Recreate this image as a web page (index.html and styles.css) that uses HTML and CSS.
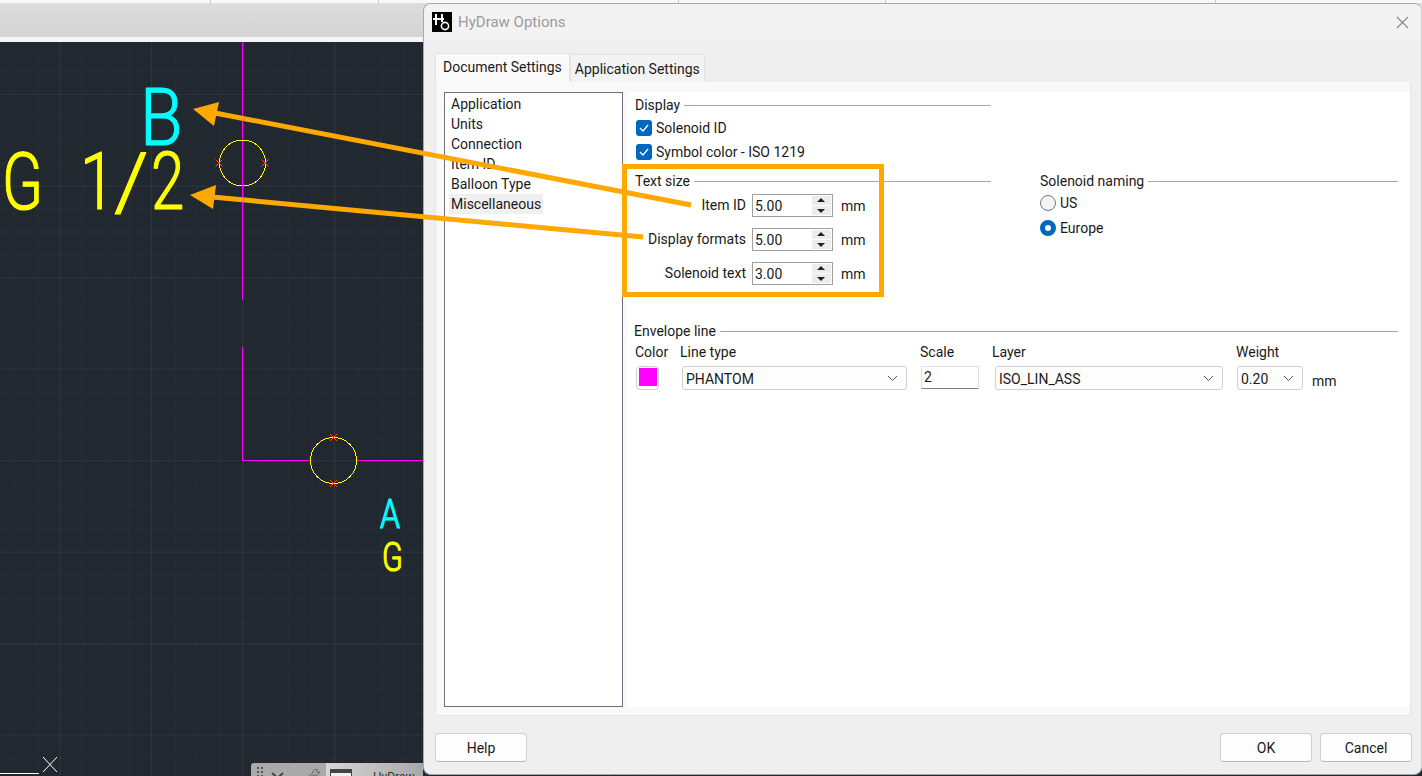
FILE: index.html
```html
<!DOCTYPE html>
<html lang="en">
<head>
    <meta charset="UTF-8">
    <title>HyDraw Options</title>
    <link rel="stylesheet" href="styles.css">
</head>
<body>
    <div class="app-strip">
        <i class="tick t1"></i><i class="tick t2"></i><i class="tick t3"></i><i class="tick t4"></i><i class="tick t5"></i>
    </div>
    <div class="app-ribbon"></div>
    <div class="app-gap"></div>

    <!-- drawing area -->
    <div class="canvas">
        <svg class="drawing" width="1422" height="734" viewBox="0 42 1422 734">
            <defs>
                <pattern id="minorGrid" patternUnits="userSpaceOnUse" x="13.75" y="2.5" width="22.9" height="22.9">
                    <path d="M0 0V22.9M0 0H22.9" stroke="#2a313b" stroke-width="1" fill="none"/>
                </pattern>
                <pattern id="majorGrid" patternUnits="userSpaceOnUse" x="59.5" y="2.5" width="91.5" height="91.5">
                    <path d="M0 0V91.5M0 0H91.5" stroke="#353c49" stroke-width="1" fill="none"/>
                </pattern>
            </defs>
            <rect y="42" width="1422" height="734" fill="url(#minorGrid)"/>
            <rect y="42" width="1422" height="734" fill="url(#majorGrid)"/>

            <g stroke="#ff00ff" stroke-width="1" fill="none">
                <path d="M242.5 42V300M242.5 347V460.5H310M357 460.5H423"/>
            </g>
            <g stroke="#ffff00" stroke-width="1" fill="none" shape-rendering="crispEdges">
                <circle cx="242.5" cy="163" r="23"/>
                <circle cx="333.5" cy="460.5" r="23"/>
            </g>
            <g stroke="#ff4a1a" stroke-width="1" fill="none">
                <path d="M215.5 159.5L222.5 166.5M222.5 159.5L215.5 166.5M261.5 159.5L268.5 166.5M268.5 159.5L261.5 166.5"/>
                <path d="M330 434L337 441M337 434L330 441M330 480L337 487M337 480L330 487"/>
            </g>
            <path d="M0 773.5H39M43 757L57 772M57 757L43 772" stroke="#ffffff" stroke-width="1" fill="none"/>

            <text class="cad cad-cyan" transform="translate(140 145) scale(0.88 1)" font-size="79">B</text>
            <text class="cad cad-yellow" transform="translate(2 208.5) scale(0.76 1)" font-size="79">G</text>
            <text class="cad cad-yellow" transform="translate(80 208.5) scale(0.8 1)" font-size="79">1</text>
            <text class="cad cad-yellow" transform="translate(114 208.5) scale(1.1 1)" font-size="79">/</text>
            <text class="cad cad-yellow" transform="translate(151 208.5) scale(0.76 1)" font-size="79">2</text>
            <text class="cad cad-cyan" transform="translate(380 528) scale(0.8 1)" font-size="40">A</text>
            <text class="cad cad-yellow" transform="translate(382 570.5) scale(0.76 1)" font-size="40">G</text>
        </svg>

        <div class="dock">
            <span class="dock-grip"></span>
            <svg class="dock-chevron" width="13" height="7" viewBox="0 0 13 7"><path d="M1 1L6.5 6L12 1" stroke="#444" stroke-width="2" fill="none"/></svg>
            <svg class="dock-wrench" width="14" height="8" viewBox="0 0 14 8"><path d="M2 8L7 4C6 1 9 0 12 0L10 2L12 4L13 2C14 5 11 7 8 6L5 8" stroke="#666" stroke-width="1" fill="none"/></svg>
            <div class="dock-tab">
                <span class="dock-window"></span>
                <span class="dock-name">HyDraw</span>
            </div>
        </div>
    </div>

    <!-- options dialog -->
    <div class="dialog">
        <div class="titlebar">
            <svg class="app-icon" width="20" height="20" viewBox="0 0 20 20">
                <rect width="20" height="20" fill="#000"/>
                <path d="M4 2V13M10 2V10M1 7H12" stroke="#fff" stroke-width="2" fill="none"/>
                <circle cx="13" cy="14" r="3.6" stroke="#fff" stroke-width="1.6" fill="none"/>
            </svg>
            <span class="title-text">HyDraw Options</span>
            <svg class="close-x" width="13" height="13" viewBox="0 0 13 13"><path d="M1 1L12 12M12 1L1 12" stroke="#8a8a8a" stroke-width="1.2" fill="none"/></svg>
        </div>

        <div class="tabs">
            <div class="tab tab-active">Document Settings</div>
            <div class="tab">Application Settings</div>
        </div>

        <div class="panel">
            <ul class="nav-list">
                <li>Application</li>
                <li>Units</li>
                <li>Connection</li>
                <li>Item ID</li>
                <li>Balloon Type</li>
                <li><span class="nav-selected">Miscellaneous</span></li>
            </ul>

            <div class="form">
                <div class="legend legend-short">Display</div>
                <label class="check-row"><span class="check"><svg width="10" height="8" viewBox="0 0 10 8"><path d="M1 4L4 7L9 1" stroke="#fff" stroke-width="1.2" fill="none"/></svg></span>Solenoid ID</label>
                <label class="check-row"><span class="check"><svg width="10" height="8" viewBox="0 0 10 8"><path d="M1 4L4 7L9 1" stroke="#fff" stroke-width="1.2" fill="none"/></svg></span>Symbol color - ISO 1219</label>

                <div class="columns">
                    <div class="col-size">
                        <div class="legend">Text size</div>
                        <div class="size-row">
                            <span class="size-label">Item ID</span>
                            <div class="spin"><span>5.00</span><div class="spin-btns"><b class="up"></b><b class="down"></b></div></div>
                            <span class="unit">mm</span>
                        </div>
                        <div class="size-row">
                            <span class="size-label">Display formats</span>
                            <div class="spin"><span>5.00</span><div class="spin-btns"><b class="up"></b><b class="down"></b></div></div>
                            <span class="unit">mm</span>
                        </div>
                        <div class="size-row">
                            <span class="size-label">Solenoid text</span>
                            <div class="spin"><span>3.00</span><div class="spin-btns"><b class="up"></b><b class="down"></b></div></div>
                            <span class="unit">mm</span>
                        </div>
                    </div>
                    <div class="col-naming">
                        <div class="legend">Solenoid naming</div>
                        <label class="radio-row"><span class="radio"></span>US</label>
                        <label class="radio-row"><span class="radio radio-on"></span>Europe</label>
                    </div>
                </div>

                <div class="legend legend-env">Envelope line</div>
                <div class="env-labels">
                    <span class="w-color">Color</span>
                    <span class="w-type">Line type</span>
                    <span class="w-scale">Scale</span>
                    <span class="w-layer">Layer</span>
                    <span>Weight</span>
                </div>
                <div class="env-row">
                    <span class="swatch"><i></i></span>
                    <div class="combo combo-type">PHANTOM<svg width="11" height="7" viewBox="0 0 11 7"><path d="M1 1L5.5 5.5L10 1" stroke="#555" fill="none"/></svg></div>
                    <div class="text-input">2</div>
                    <div class="combo combo-layer">ISO_LIN_ASS<svg width="11" height="7" viewBox="0 0 11 7"><path d="M1 1L5.5 5.5L10 1" stroke="#555" fill="none"/></svg></div>
                    <div class="combo combo-weight">0.20<svg width="11" height="7" viewBox="0 0 11 7"><path d="M1 1L5.5 5.5L10 1" stroke="#555" fill="none"/></svg></div>
                    <span class="env-unit">mm</span>
                </div>
            </div>
        </div>

        <div class="footer">
            <button class="btn">Help</button>
            <span class="footer-space"></span>
            <button class="btn">OK</button>
            <button class="btn">Cancel</button>
        </div>
    </div>

    <!-- annotation drawn over the screenshot -->
    <svg class="markup" width="1422" height="776" viewBox="0 0 1422 776">
        <rect x="624.5" y="166.5" width="257" height="128" fill="none" stroke="#ffa800" stroke-width="5"/>
        <path d="M215 113L691 205" stroke="#ffa800" stroke-width="5" fill="none"/>
        <path d="M193 109L219 102L214 126Z" fill="#ffa800"/>
        <path d="M212 197L643 237" stroke="#ffa800" stroke-width="5" fill="none"/>
        <path d="M190 195L216 185L213 209Z" fill="#ffa800"/>
    </svg>
</body>
</html>
```

FILE: styles.css
```css
* {
    box-sizing: border-box;
}

html, body {
    margin: 0;
    height: 776px;
    overflow: hidden;
}

body {
    position: relative;
    display: flex;
    flex-direction: column;
    font-family: "Roboto", "Open Sans", sans-serif;
    font-size: 14px;
    color: #1a1a1a;
    background: #212830;
}

.app-strip {
    position: relative;
    height: 4px;
    background: #f7f7f7;
    border-bottom: 1px solid #e0e0e0;
}

.tick {
    position: absolute;
    top: 0;
    width: 1px;
    height: 3px;
    background: #c8c8c8;
}

.t1 { left: 210px; }
.t2 { left: 378px; }
.t3 { left: 678px; }
.t4 { left: 885px; }
.t5 { left: 1215px; }

.app-ribbon {
    height: 33px;
    background: linear-gradient(#dcdcdc, #d4d4d4);
}

.app-gap {
    height: 5px;
    background: #f5f5f5;
}

.canvas {
    position: relative;
    flex: 1;
    background: #212830;
    overflow: hidden;
}

.drawing {
    display: block;
}

.cad {
    font-family: "Roboto", "Liberation Sans", sans-serif;
    font-weight: 300;
    stroke-linejoin: round;
    stroke-width: 1.2px;
}

.cad-cyan {
    fill: #00ffff;
    stroke: #00ffff;
}

.cad-yellow {
    fill: #ffff00;
    stroke: #ffff00;
}

.dock {
    position: absolute;
    left: 251px;
    bottom: 0;
    width: 172px;
    height: 13px;
    display: flex;
    padding-left: 5px;
    background: #a9a9a9;
    border-radius: 3px 0 0 0;
    overflow: hidden;
}

.dock-grip {
    width: 8px;
    height: 13px;
    margin-top: 3px;
    background-image: radial-gradient(#555 1px, transparent 1.2px);
    background-size: 4px 4px;
}

.dock-chevron {
    margin: 9px 0 0 7px;
}

.dock-wrench {
    margin: 6px 0 0 22px;
}

.dock-tab {
    flex: 1;
    display: flex;
    gap: 22px;
    margin-left: 6px;
    padding: 7px 0 0 5px;
    background: linear-gradient(90deg, #d6d6d6, #a8a8a8);
    color: #333;
    font-size: 12px;
    line-height: 14px;
}

.dock-window {
    width: 20px;
    height: 12px;
    background: #f0f0f0;
    border-top: 3px solid #444;
    outline: 1px solid #444;
}

.dialog {
    position: absolute;
    left: 423px;
    top: 3px;
    width: 999px;
    height: 772px;
    display: flex;
    flex-direction: column;
    background: #efefef;
    border: 1px solid #a8a8a8;
    border-right-color: #d0d0d0;
    border-radius: 8px;
    overflow: hidden;
}

.titlebar {
    height: 36px;
    display: flex;
    align-items: center;
    flex-shrink: 0;
    padding: 0 12px 0 8px;
    background: #f3f3f3;
}

.title-text {
    margin-left: 6px;
    margin-top: -1px;
    font-size: 15px;
    color: #9b9b9b;
}

.close-x {
    margin-left: auto;
}

.tabs {
    display: flex;
    align-items: flex-end;
    height: 42px;
    padding: 0 0 0 11px;
    flex-shrink: 0;
}

.tab {
    height: 28px;
    padding: 0 4px;
    line-height: 29px;
    background: #f3f3f3;
    border: 1px solid #e3e3e3;
    border-bottom: none;
}

.tab-active {
    height: 29px;
    padding: 0 7px;
    line-height: 27px;
    background: #fafafa;
}

.panel {
    margin: 0 10px 0 11px;
    height: 634px;
    flex-shrink: 0;
    display: flex;
    padding: 10px 0 8px 8px;
    background: #f9f9f9;
    border: 1px solid #e6e6e6;
    border-top: none;
}

.nav-list {
    width: 179px;
    margin: 0;
    padding: 1px 6px;
    list-style: none;
    background: #fff;
    border: 1px solid #6f6f80;
}

.nav-list li {
    height: 20px;
    line-height: 20px;
}

.nav-selected {
    display: inline-block;
    margin-left: -2px;
    padding: 0 2px;
    background: #f0f0f0;
}

.form {
    flex: 1;
    margin-left: 4px;
    padding: 4px 12px 0 8px;
    background: #fff;
}

.legend {
    display: flex;
    align-items: center;
    gap: 4px;
    height: 18px;
}

.legend::after {
    content: "";
    flex: 1;
    height: 1px;
    background: #a6a6a6;
}

.legend-short {
    width: 356px;
}

.check-row {
    display: flex;
    align-items: center;
    height: 24px;
    padding-left: 1px;
}

.legend + .check-row {
    margin-top: 2px;
}

.check {
    width: 16px;
    height: 16px;
    margin-right: 4px;
    display: flex;
    align-items: center;
    justify-content: center;
    background: #0067c0;
    border-radius: 3px;
}

.columns {
    display: flex;
    margin-top: 8px;
}

.col-size {
    width: 356px;
}

.col-naming {
    flex: 1;
    margin-left: 49px;
}

.size-row {
    display: flex;
    align-items: center;
    height: 23px;
    margin-top: 11px;
}

.legend + .size-row {
    margin-top: 4px;
}

.size-label {
    width: 111px;
    padding-bottom: 1px;
    text-align: right;
    white-space: nowrap;
}

.spin {
    width: 81px;
    height: 23px;
    margin-left: 6px;
    display: flex;
    align-items: center;
    justify-content: space-between;
    padding: 0 1px 0 2px;
    background: #fff;
    border: 1px solid #a0a0a0;
}

.spin-btns {
    width: 19px;
    display: flex;
    flex-direction: column;
    gap: 1px;
}

.spin-btns b {
    height: 9px;
    display: block;
    position: relative;
    background: #ececec;
}

.spin-btns b::after {
    content: "";
    position: absolute;
    left: 5px;
    border-left: 4px solid transparent;
    border-right: 4px solid transparent;
}

.spin-btns .up::after {
    top: 2px;
    border-bottom: 4px solid #222;
}

.spin-btns .down::after {
    top: 3px;
    border-top: 4px solid #222;
}

.unit {
    margin-left: 8px;
}

.radio-row {
    display: flex;
    align-items: center;
    gap: 4px;
    height: 25px;
}

.radio {
    width: 16px;
    height: 16px;
    background: #f4f4f4;
    border: 1px solid #767676;
    border-radius: 50%;
}

.radio-on {
    background: #fff;
    border: 5px solid #0067c0;
}

.legend-env {
    margin-top: 37px;
    margin-left: -1px;
}

.env-labels {
    display: flex;
    height: 20px;
    margin-top: 2px;
    line-height: 20px;
}

.w-color { width: 45px; }
.w-type { width: 240px; }
.w-scale { width: 72px; }
.w-layer { width: 244px; }

.env-row {
    display: flex;
    align-items: flex-start;
    margin-top: 4px;
}

.swatch {
    width: 23px;
    height: 24px;
    margin-left: 1px;
    padding: 1px 1px 0 1px;
    background: #fbfbfb;
    border: 1px solid #d0d0d0;
    border-radius: 4px;
}

.swatch i {
    display: block;
    width: 18px;
    height: 18px;
    margin: 0 auto;
    background: #ff00ff;
}

.combo {
    height: 24px;
    display: flex;
    align-items: center;
    justify-content: space-between;
    padding: 1px 8px 0 3px;
    background: #fdfdfd;
    border: 1px solid #cfcfcf;
    border-radius: 3px;
}

.combo-type {
    width: 225px;
    margin-left: 23px;
}

.text-input {
    width: 58px;
    height: 23px;
    margin-left: 14px;
    padding: 2px 2px 0;
    background: #fff;
    border: 1px solid #e0e0e0;
    border-bottom: 1px solid #808080;
}

.combo-layer {
    width: 228px;
    margin-left: 16px;
}

.combo-weight {
    width: 66px;
    margin-left: 14px;
}

.env-unit {
    margin-left: 9px;
    margin-top: 7px;
}

.footer {
    display: flex;
    gap: 8px;
    margin-top: 17px;
    padding: 0 9px 0 11px;
}

.footer-space {
    flex: 1;
}

.btn {
    width: 92px;
    height: 29px;
    font: inherit;
    color: #1a1a1a;
    background: #fdfdfd;
    border: 1px solid #d0d0d0;
    border-bottom-color: #b8b8b8;
    border-radius: 4px;
}

.markup {
    position: absolute;
    left: 0;
    top: 0;
    pointer-events: none;
}
```
